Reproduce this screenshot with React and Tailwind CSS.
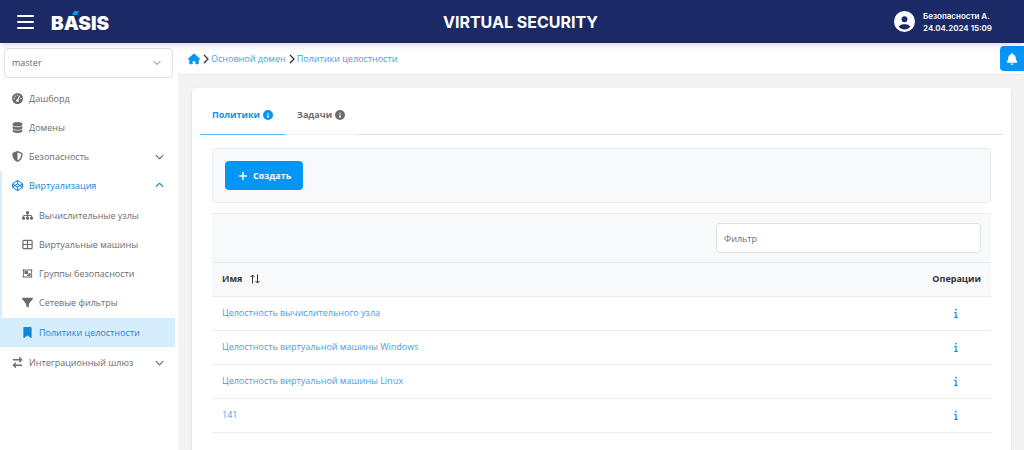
import React, { useState } from "react";
import {
  FaArrowRightArrowLeft,
  FaBell,
  FaBookmark,
  FaChevronDown,
  FaChevronRight,
  FaChevronUp,
  FaCircleInfo,
  FaCircleUser,
  FaCodepen,
  FaDatabase,
  FaFilter,
  FaGaugeHigh,
  FaHouse,
  FaInfo,
  FaRegObjectGroup,
  FaShieldHalved,
  FaSitemap,
} from "react-icons/fa6";
import { ChevronDown, Plus } from "lucide-react";

const GridIcon = ({ className }) => (
  <svg viewBox="0 0 12 12" fill="none" stroke="currentColor" strokeWidth="1.3" className={className}>
    <rect x="1" y="1.5" width="10" height="9" rx="1" />
    <path d="M6 1.5v9M1 6h10" />
  </svg>
);

const SortIcon = () => (
  <svg viewBox="0 0 10 10" fill="none" stroke="currentColor" strokeWidth="1" className="size-[10px]">
    <path d="M2.5 9.5V1M0.5 3l2-2 2 2M7.5 0.5V9M5.5 7l2 2 2-2" />
  </svg>
);

const subItems = [
  { label: "Вычислительные узлы", icon: FaSitemap },
  { label: "Виртуальные машины", icon: GridIcon },
  { label: "Группы безопасности", icon: FaRegObjectGroup },
  { label: "Сетевые фильтры", icon: FaFilter },
  { label: "Политики целостности", icon: FaBookmark, active: true },
];

const menu = [
  { label: "Дашборд", icon: FaGaugeHigh },
  { label: "Домены", icon: FaDatabase },
  { label: "Безопасность", icon: FaShieldHalved, chevron: true },
  { label: "Виртуализация", icon: FaCodepen, chevron: true, children: subItems },
  { label: "Интеграционный шлюз", icon: FaArrowRightArrowLeft, chevron: true },
];

const policies = [
  "Целостность вычислительного узла",
  "Целостность виртуальной машины Windows",
  "Целостность виртуальной машины Linux",
  "141",
];

const Header = () => (
  <header className="relative z-10 flex h-[43px] items-center bg-[#1b2a66] pl-[17px] font-['Inter',sans-serif] text-white shadow-md">
    <div className="flex flex-1 items-center gap-[17px]">
      <button type="button" aria-label="Меню" className="flex w-[17px] flex-col gap-1">
        <span className="h-[2px] rounded-full bg-white" />
        <span className="h-[2px] rounded-full bg-white" />
        <span className="h-[2px] rounded-full bg-white" />
      </button>
      <a href="#">
        <svg viewBox="0 0 64 30" className="h-[30px] w-16">
          <text x="0" y="23" fill="#fff" fontSize="19" fontWeight="900" fontFamily="Inter, sans-serif">
            BASIS
          </text>
          <path d="M23 4h5l-2 4h-5z" fill="#0596f5" />
        </svg>
      </a>
    </div>
    <h1 className="text-base font-bold">VIRTUAL SECURITY</h1>
    <div className="flex flex-1 items-center justify-end gap-2">
      <FaCircleUser className="size-[21px]" />
      <div className="mr-8 text-[8px] font-semibold leading-3">
        <p>Безопасности А.</p>
        <p>24.04.2024 15:09</p>
      </div>
    </div>
  </header>
);

const MenuItem = ({ item }) => {
  const Icon = item.icon;
  const Chevron = item.children ? FaChevronUp : FaChevronDown;
  return (
    <li className={item.children ? "border-l-2 border-[#d6edfe]" : "border-l-2 border-transparent"}>
      <a
        href="#"
        className={`flex h-[29px] items-center gap-[6px] pl-[10px] pr-[11px] ${
          item.children ? "text-[#1585d8]" : "text-[#6c6c6c]"
        }`}
      >
        <Icon className="size-[11px]" />
        {item.label}
        {item.chevron && <Chevron className="ml-auto size-[9px]" />}
      </a>
      {item.children && (
        <ul className="pt-px">
          {item.children.map((child) => (
            <li key={child.label} className={child.active ? "-ml-[2px] my-px bg-[#d6edfe] pl-[2px]" : ""}>
              <a
                href="#"
                className={`flex h-[29px] items-center gap-[6px] pl-5 ${
                  child.active ? "text-[#1585d8]" : "text-[#6c6c6c]"
                }`}
              >
                <child.icon className="size-[11px]" />
                {child.label}
              </a>
            </li>
          ))}
        </ul>
      )}
    </li>
  );
};

const Sidebar = () => (
  <aside className="w-[178px] shrink-0 bg-white pr-[3px] pt-[5px]">
    <div className="relative ml-1 mr-[2px]">
      <select
        aria-label="Сервер"
        className="h-[30px] w-full appearance-none rounded border border-[#dee2e6] bg-white px-[7px] text-[#6c6c6c]"
      >
        <option>master</option>
      </select>
      <ChevronDown className="pointer-events-none absolute right-[10px] top-[9px] size-3 text-[#6c6c6c]" />
    </div>
    <nav className="mt-[6px]">
      <ul>
        {menu.map((item) => (
          <MenuItem key={item.label} item={item} />
        ))}
      </ul>
    </nav>
  </aside>
);

const Breadcrumbs = () => (
  <div className="flex h-8 items-center justify-between rounded-b border-b border-[#e8e8e8] bg-white pl-[10px]">
    <nav className="flex items-center gap-[2px] text-[#3b9ff0]">
      <a href="#" aria-label="Главная">
        <FaHouse className="size-3 text-[#0596f5]" />
      </a>
      <FaChevronRight className="h-[10px] w-[7px] text-[#333]" />
      <a href="#">Основной домен</a>
      <FaChevronRight className="h-[10px] w-[7px] text-[#333]" />
      <a href="#">Политики целостности</a>
    </nav>
    <button
      type="button"
      aria-label="Уведомления"
      className="flex h-[25px] w-6 items-center justify-center rounded-l bg-[#0596f5] text-white"
    >
      <FaBell className="size-3" />
    </button>
  </div>
);

const PoliciesTable = () => {
  const [filter, setFilter] = useState("");
  const rows = policies.filter((name) => name.toLowerCase().includes(filter.toLowerCase()));

  return (
    <div className="mt-[10px]">
      <div className="flex justify-end border-y border-[#e9ecef] bg-[#f8f9fb] px-[10px] py-[9px]">
        <input
          type="text"
          aria-label="Фильтр"
          placeholder="Фильтр"
          value={filter}
          onChange={(e) => setFilter(e.target.value)}
          className="h-[30px] w-[265px] rounded border border-[#dee2e6] bg-white px-[7px] placeholder:text-[#6c6c6c]"
        />
      </div>
      <table className="w-full">
        <thead>
          <tr className="h-[33px] border-b border-[#e9ecef] bg-[#f8f9fb] text-[#333]">
            <th className="pl-[10px] text-left font-bold">
              <button type="button" className="flex items-center gap-2">
                Имя <SortIcon />
              </button>
            </th>
            <th className="w-[70px] pr-[10px] text-right font-bold">Операции</th>
          </tr>
        </thead>
        <tbody>
          {rows.map((name) => (
            <tr key={name} className="h-[34px] border-b border-[#ededed]">
              <td className="pl-[10px]">
                <a href="#" className="text-[#3b9ff0]">
                  {name}
                </a>
              </td>
              <td>
                <button type="button" aria-label="Информация" className="mx-auto flex text-[#0596f5]">
                  <FaInfo className="size-[10px]" />
                </button>
              </td>
            </tr>
          ))}
        </tbody>
      </table>
    </div>
  );
};

const App = () => {
  return (
    <div className="flex min-h-screen flex-col bg-[#f3f3f3] font-['Open_Sans',sans-serif] text-[9px] leading-4">
      <Header />
      <div className="flex flex-1">
        <Sidebar />
        <main className="flex min-w-0 flex-1 flex-col">
          <Breadcrumbs />
          <section className="ml-[14px] mr-[13px] mt-[13px] flex-1 rounded-t bg-white px-2 shadow-sm">
            <div role="tablist" className="flex h-[47px] items-stretch border-b border-[#dee2e6] font-bold">
              <button
                type="button"
                role="tab"
                aria-selected="true"
                className="-mb-px flex items-center gap-[3px] border-b border-[#5bbafa] px-3 pt-2 text-[#0596f5]"
              >
                Политики <FaCircleInfo className="size-[10px]" />
              </button>
              <button
                type="button"
                role="tab"
                aria-selected="false"
                className="-mb-px flex items-center gap-[3px] border-b border-[#f0f0f0] px-3 pt-2 text-[#6c6c6c]"
              >
                Задачи <FaCircleInfo className="size-[10px]" />
              </button>
            </div>
            <div className="mx-3 mt-[13px]">
              <div className="rounded border border-[#e9ecef] bg-[#f8f9fb] p-3">
                <button
                  type="button"
                  className="flex h-[29px] items-center gap-1 rounded bg-[#0596f5] px-3 font-bold text-white"
                >
                  <Plus className="size-3" strokeWidth={3} /> Создать
                </button>
              </div>
              <PoliciesTable />
            </div>
          </section>
        </main>
      </div>
    </div>
  );
};

export default App;
